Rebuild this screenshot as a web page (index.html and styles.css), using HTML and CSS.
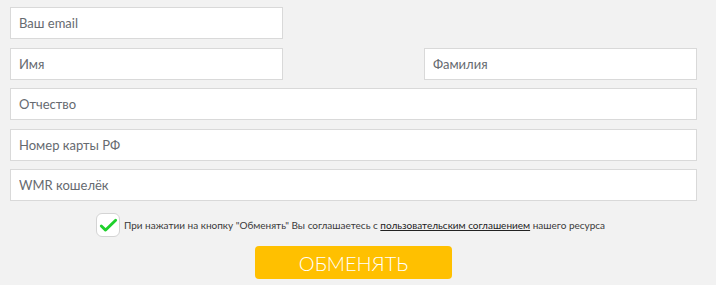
FILE: index.html
```html
<!DOCTYPE html>
<html lang="ru">

<head>
    <meta charset="UTF-8">
    <meta name="viewport" content="width=device-width, initial-scale=1.0">
    <title>Обмен</title>
    <link rel="stylesheet" href="styles.css">
</head>

<body>
    <div class="exchange-form">
        <input type="email" class="field field-half" placeholder="Ваш email">

        <div class="field-row">
            <input type="text" class="field field-half" placeholder="Имя">
            <input type="text" class="field field-half" placeholder="Фамилия">
        </div>

        <input type="text" class="field" placeholder="Отчество">
        <input type="text" class="field" placeholder="Номер карты РФ">
        <input type="text" class="field" placeholder="WMR кошелёк">

        <label class="agree">
            <span class="agree-box">
                <svg width="23" height="23" viewBox="0 0 23 23">
                    <path d="M4.5 12 L9 16.3 L19.5 6" fill="none" stroke="#1fd02c" stroke-width="3"
                        stroke-linecap="round" stroke-linejoin="round" />
                </svg>
            </span>
            <span class="agree-text">При нажатии на кнопку "Обменять" Вы соглашаетесь с <a href="#">пользовательским соглашением</a> нашего ресурса</span>
        </label>

        <button class="exchange-btn">ОБМЕНЯТЬ</button>

        <input type="text" class="field" placeholder="">
    </div>
</body>

</html>
```

FILE: styles.css
```css
body {
    margin: 0;
    padding: 0;
    background-color: #f2f2f2;
    font-family: 'Lato', 'Open Sans', sans-serif;
    height: 285px;
    overflow: hidden;
}

.exchange-form {
    width: 687px;
    padding: 7px 0 0 10px;
    display: flex;
    flex-direction: column;
    gap: 8.5px;
}

.field-row {
    display: flex;
    justify-content: space-between;
}

.field {
    box-sizing: border-box;
    width: 687px;
    height: 32px;
    margin: 0;
    padding: 0 8px;
    background-color: #fff;
    border: 1px solid #d9d9d9;
    border-radius: 0;
    font-family: inherit;
    font-size: 13px;
    color: #555;
    outline: none;
}

.field::placeholder {
    color: #666a70;
}

.field-half {
    width: 273px;
}

.agree {
    display: flex;
    align-items: center;
    justify-content: center;
    gap: 4px;
    margin-top: 3.5px;
    padding-right: 6px;
}

.agree-box {
    box-sizing: border-box;
    width: 24px;
    height: 24px;
    background-color: #fff;
    border: 1px solid #d4d4d4;
    border-radius: 6px;
    display: flex;
    align-items: center;
    justify-content: center;
}

.agree-text {
    font-size: 10px;
    color: #3a3a3a;
}

.agree-text a {
    color: #222;
    text-decoration: underline;
}

.exchange-btn {
    align-self: center;
    width: 197px;
    height: 33px;
    margin-top: 0.5px;
    margin-bottom: -3px;
    background-color: #ffc000;
    color: #fff;
    border: none;
    border-radius: 4px;
    font-family: inherit;
    font-size: 20px;
    font-weight: 300;
    cursor: pointer;
}
```
